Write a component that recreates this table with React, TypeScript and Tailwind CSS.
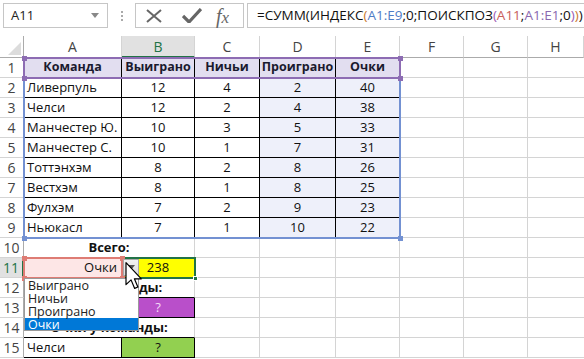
import React from 'react';

const teams: [string, number, number, number, number][] = [
    ['Ливерпуль', 12, 4, 2, 40],
    ['Челси', 12, 2, 4, 38],
    ['Манчестер Ю.', 10, 3, 5, 33],
    ['Манчестер С.', 10, 1, 7, 31],
    ['Тоттэнхэм', 8, 2, 8, 26],
    ['Вестхэм', 8, 1, 8, 25],
    ['Фулхэм', 7, 2, 9, 23],
    ['Ньюкасл', 7, 1, 10, 22]
];

const columns = ['A', 'B', 'C', 'D', 'E', 'F', 'G', 'H'];

const cell = 'h-[20px] border-r border-b border-[#d4d4d4] flex items-center overflow-hidden whitespace-nowrap';
const rowHead = 'h-[20px] border-r border-b border-r-[#ababab] border-b-[#d4d4d4] flex items-center justify-center text-[14px] text-[#444]';

// blank gridline cells filling the rest of a row, last one runs to the window edge
function Blank({ count }: { count: number }) {
    return (
        <>
            {Array.from({ length: count }).map((_, i) => (
                <div key={i} className={i === count - 1 ? cell + ' border-r-0' : cell} />
            ))}
        </>
    );
}

function FormulaBar() {
    return (
        <div className="h-[36px] flex items-start pt-[3px] pl-[3px] font-['Open_Sans',sans-serif]">
            <div className="w-[105px] h-[25px] border border-[#c6c6c6] flex items-center justify-between pl-[7px] pr-[8px] text-[13px] text-[#222]">
                <span>A11</span>
                <svg width="8" height="5" viewBox="0 0 8 5">
                    <path d="M0 0 L8 0 L4 5 Z" fill="#888" />
                </svg>
            </div>
            <div className="w-[27px] h-[25px] flex flex-col items-center justify-center gap-[2px]">
                <span className="w-[2px] h-[2px] bg-[#aaa]" />
                <span className="w-[2px] h-[2px] bg-[#aaa]" />
                <span className="w-[2px] h-[2px] bg-[#aaa]" />
            </div>
            <div className="w-[109px] h-[25px] border border-[#c6c6c6] flex items-center pl-[9px]">
                <svg width="18" height="14" viewBox="0 0 18 14">
                    <path d="M2 1 L16 13 M16 1 L2 13" stroke="#666" strokeWidth="2" />
                </svg>
                <svg className="ml-[19px]" width="20" height="15" viewBox="0 0 20 15">
                    <path d="M1 8 L7 14 L19 1" stroke="#666" strokeWidth="3.2" fill="none" />
                </svg>
                <span className="ml-[14px] text-[20px] leading-none italic text-[#666] font-['Liberation_Serif',serif]">
                    f<span className="text-[17px]">x</span>
                </span>
            </div>
            <div className="ml-[3px] flex-1 h-[25px] border border-r-0 border-[#c6c6c6] flex items-center pl-[9px] text-[13.5px] text-[#111] whitespace-nowrap">
                =СУММ(ИНДЕКС<span className="text-[#c9772e]">(</span>
                <span className="text-[#4f7cc6]">A1:E9</span>;0;ПОИСКПОЗ
                <span className="text-[#9a5cb4]">(</span>
                <span className="text-[#c8605a]">A11</span>;
                <span className="text-[#8a68b0]">A1:E1</span>;0
                <span className="text-[#9a5cb4]">)</span>
                <span className="text-[#c9772e]">)</span>)
            </div>
        </div>
    );
}

function Corner({ x, y, color }: { x: number; y: number; color: string }) {
    return (
        <span
            className="absolute w-[5px] h-[5px]"
            style={{ left: x - 2, top: y - 2, background: color }}
        />
    );
}

function Sheet() {
    const numCell = cell + ' justify-center border-r-black border-b-black';
    return (
        <div className="relative font-['Open_Sans',sans-serif] text-[13px] text-[#111]">
            <div className="grid grid-cols-[24px_98px_73px_65px_76px_64px_64px_64px_1fr]">
                {/* column headers */}
                <div className="h-[22px] border-r border-b border-[#ababab] relative">
                    <svg className="absolute right-[2px] bottom-[2px]" width="13" height="13" viewBox="0 0 13 13">
                        <path d="M13 0 L13 13 L0 13 Z" fill="#dcdcdc" />
                    </svg>
                </div>
                {columns.map((c) =>
                    c === 'B' ? (
                        <div
                            key={c}
                            className="h-[22px] border-r border-[#d4d4d4] border-b-2 border-b-[#217346] bg-[#e1e1e1] flex items-center justify-center text-[14px] text-[#217346]"
                        >
                            {c}
                        </div>
                    ) : (
                        <div
                            key={c}
                            className="h-[22px] border-r border-b border-r-[#d4d4d4] border-b-[#ababab] flex items-center justify-center text-[14px] text-[#444]"
                        >
                            {c}
                        </div>
                    )
                )}

                {/* row 1 */}
                <div className={rowHead}>1</div>
                {['Команда', 'Выиграно', 'Ничьи', 'Проиграно', 'Очки'].map((h) => (
                    <div key={h} className={numCell + ' bg-[#e2def0] font-bold text-[#1a1a2e] text-[12.5px]'}>
                        {h}
                    </div>
                ))}
                <Blank count={3} />

                {/* rows 2-9 */}
                {teams.map((t, i) => (
                    <React.Fragment key={t[0]}>
                        <div className={rowHead}>{i + 2}</div>
                        <div className={cell + ' pl-[3px] border-r-black border-b-black'}>{t[0]}</div>
                        <div className={numCell}>{t[1]}</div>
                        <div className={numCell}>{t[2]}</div>
                        <div className={numCell + ' bg-[#eef0fa]'}>{t[3]}</div>
                        <div className={numCell + ' bg-[#eef0fa]'}>{t[4]}</div>
                        <Blank count={3} />
                    </React.Fragment>
                ))}

                {/* row 10 */}
                <div className={rowHead}>10</div>
                <div className={cell + ' col-span-2 justify-center font-bold'}>Всего:</div>
                <Blank count={6} />

                {/* row 11 */}
                <div className="h-[20px] border-r-2 border-b border-r-[#217346] border-b-[#d4d4d4] bg-[#e1e1e1] flex items-center justify-center text-[14px] text-[#217346]">
                    11
                </div>
                <div className={cell + ' justify-end pr-[4px] bg-[#fde6e6]'}>Очки</div>
                <div className={cell + ' justify-center bg-[#ffff00]'}>238</div>
                <Blank count={6} />

                {/* row 12 */}
                <div className={rowHead}>12</div>
                <div className={cell + ' col-span-2 justify-center font-bold border-b-black'}>Очки команды:</div>
                <Blank count={6} />

                {/* row 13 */}
                <div className={rowHead}>13</div>
                <div className={cell + ' border-r-black border-b-black'} />
                <div className={cell + ' justify-center bg-[#b94fca] text-[#f4dcf6] border-r-black border-b-black'}>?</div>
                <Blank count={6} />

                {/* row 14 */}
                <div className={rowHead}>14</div>
                <div className={cell + ' col-span-2 justify-center font-bold border-b-black'}>Очки у команды:</div>
                <Blank count={6} />

                {/* row 15 */}
                <div className={rowHead}>15</div>
                <div className={cell + ' pl-[3px] border-r-black border-b-black'}>Челси</div>
                <div className={cell + ' justify-center bg-[#92d050] border-r-black border-b-black'}>?</div>
                <Blank count={6} />
            </div>

            {/* range highlights from the formula */}
            <div className="absolute left-[23px] top-[21px] w-[378px] h-[182px] border-2 border-[#7391d2]" />
            <div className="absolute left-[23px] top-[21px] w-[378px] h-[22px] border-2 border-[#8d6cb3]" />
            <Corner x={24} y={22} color="#8d6cb3" />
            <Corner x={400} y={22} color="#8d6cb3" />
            <Corner x={24} y={42} color="#8d6cb3" />
            <Corner x={400} y={42} color="#8d6cb3" />
            <Corner x={24} y={202} color="#7391d2" />
            <Corner x={400} y={202} color="#7391d2" />

            {/* selection A11:B11 */}
            <div className="absolute left-[23px] top-[221px] w-[173px] h-[22px] border-2 border-[#217346]" />
            <span className="absolute left-[193px] top-[240px] w-[5px] h-[5px] bg-[#217346] border border-white" />
            <div className="absolute left-[23px] top-[221px] w-[100px] h-[22px] border-2 border-[#de7c74]" />
            <Corner x={24} y={222} color="#de7c74" />
            <Corner x={122} y={222} color="#de7c74" />
            <Corner x={24} y={242} color="#de7c74" />
            <Corner x={122} y={242} color="#de7c74" />

            {/* validation dropdown button */}
            <div className="absolute left-[123px] top-[223px] w-[16px] h-[17px] border border-[#a8a8a8] bg-gradient-to-b from-[#f2f2f2] to-[#dcdcdc] flex items-center justify-center">
                <svg width="8" height="5" viewBox="0 0 8 5">
                    <path d="M0 0 L8 0 L4 5 Z" fill="#555" />
                </svg>
            </div>

            {/* validation list */}
            <div className="absolute left-[24px] top-[242px] w-[115px] h-[53px] bg-white border border-[#9a9a9a] text-[12.5px] leading-[13px] text-[#222]">
                <div className="h-[13px] pl-[3px]">Выиграно</div>
                <div className="h-[13px] pl-[3px]">Ничьи</div>
                <div className="h-[13px] pl-[3px]">Проиграно</div>
                <div className="h-[12px] pl-[3px] bg-[#0078d7] text-white">Очки</div>
            </div>

            {/* mouse pointer */}
            <svg className="absolute left-[125px] top-[226px]" width="18" height="28" viewBox="0 0 13 21">
                <path
                    d="M0.5 0.5 L0.5 17 L4.3 13.4 L7 19.8 L9.4 18.8 L6.8 12.6 L12 12.6 Z"
                    fill="white"
                    stroke="black"
                    strokeWidth="0.9"
                    strokeLinejoin="round"
                />
            </svg>
        </div>
    );
}

export default function App() {
    return (
        <div className="w-[584px] h-[359px] bg-white overflow-hidden">
            <FormulaBar />
            <Sheet />
        </div>
    );
}
